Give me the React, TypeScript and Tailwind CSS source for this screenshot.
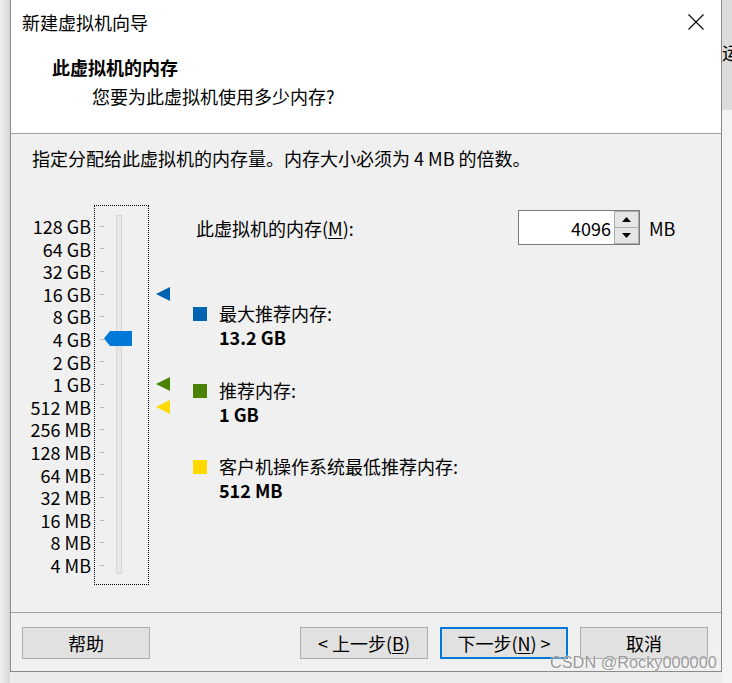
import React from "react";

const cjk = { fontFamily: '"Noto Sans CJK SC", "Noto Sans", sans-serif' };

const levels = [
  "128 GB",
  "64 GB",
  "32 GB",
  "16 GB",
  "8 GB",
  "4 GB",
  "2 GB",
  "1 GB",
  "512 MB",
  "256 MB",
  "128 MB",
  "64 MB",
  "32 MB",
  "16 MB",
  "8 MB",
  "4 MB",
];

// which slider row gets a coloured marker
const markers: Record<number, string> = {
  3: "#0063b1",
  7: "#498205",
  8: "#ffd800",
};

const legend = [
  { color: "bg-[#0063b1]", label: "最大推荐内存:", value: "13.2 GB", mt: "mt-[56px]" },
  { color: "bg-[#498205]", label: "推荐内存:", value: "1 GB", mt: "mt-[29px]" },
  { color: "bg-[#ffd800]", label: "客户机操作系统最低推荐内存:", value: "512 MB", mt: "mt-[28px]" },
];

function Triangle({ color }: { color: string }) {
  return (
    <svg width="14" height="14" viewBox="0 0 14 14">
      <polygon points="0,7 14,0 14,14" fill={color} />
    </svg>
  );
}

function Slider() {
  return (
    <div className="flex">
      <div className="flex w-[83px] flex-col items-end pt-[10px] pr-[3px]">
        {levels.map((l) => (
          <div key={l} className="h-[22.6px] text-[18px] leading-[22.6px]">
            {l}
          </div>
        ))}
      </div>
      <div className="flex h-[380px] w-[55px] border border-dotted border-black pt-[9px]">
        <div className="ml-[5px] flex w-[4px] flex-col">
          {levels.map((l) => (
            <div key={l} className="flex h-[22.6px] items-center">
              <div className="h-px w-[4px] bg-[#b8b8b8]" />
            </div>
          ))}
        </div>
        <div className="relative ml-[12px] h-[359px] w-[6px] border border-[#d6d6d6] bg-[#e7e7e7]">
          <svg
            className="absolute left-[-13px] top-[115px]"
            width="28"
            height="15"
            viewBox="0 0 28 15"
          >
            <polygon points="0,7.5 6,0 28,0 28,15 6,15" fill="#0078d7" />
          </svg>
        </div>
      </div>
      <div className="ml-[7px] flex w-[14px] flex-col pt-[10px]">
        {levels.map((l, i) => (
          <div key={l} className="flex h-[22.6px] items-center">
            {markers[i] && <Triangle color={markers[i]} />}
          </div>
        ))}
      </div>
    </div>
  );
}

function SpinInput() {
  return (
    <div className="flex h-[35px] w-[122px] border border-[#7a7a7a] bg-white">
      <div className="flex flex-1 items-center justify-end pr-[3px] text-[18px] leading-none">4096</div>
      <div className="flex w-[25px] flex-col">
        <div className="flex flex-1 items-center justify-center border border-[#adadad] bg-[#e5e5e5]">
          <svg width="9" height="5" viewBox="0 0 9 5">
            <polygon points="4.5,0 9,5 0,5" fill="#000" />
          </svg>
        </div>
        <div className="flex flex-1 items-center justify-center border border-t-0 border-[#adadad] bg-[#e5e5e5]">
          <svg width="9" height="5" viewBox="0 0 9 5">
            <polygon points="0,0 9,0 4.5,5" fill="#000" />
          </svg>
        </div>
      </div>
    </div>
  );
}

function Button({ children, primary }: { children: React.ReactNode; primary?: boolean }) {
  return (
    <button
      className={
        primary
          ? "flex h-[32px] w-[128px] items-center justify-center border-2 border-[#0078d7] bg-[#e1e1e1] text-[18px] leading-none"
          : "flex h-[32px] w-[128px] items-center justify-center border border-[#adadad] bg-[#e1e1e1] text-[18px] leading-none"
      }
    >
      {children}
    </button>
  );
}

export default function App() {
  return (
    <div className="relative flex h-[683px] w-[732px] overflow-hidden bg-[#ececec] text-black" style={cjk}>
      <div className="h-full w-[10px] bg-gradient-to-r from-[#efefef] to-[#d6d6d6]" />

      <div className="flex h-[672px] w-[712px] flex-col border-x border-b border-[#8a8a8a]">
        <div className="h-[134px] border-b border-[#a0a0a0] bg-white">
          <div className="flex h-[44px] items-center justify-between pl-[11px] pr-[17px]">
            <span className="text-[18px] leading-6">新建虚拟机向导</span>
            <svg width="16" height="16" viewBox="0 0 16 16">
              <path d="M0.5 0.5 L15.5 15.5 M15.5 0.5 L0.5 15.5" stroke="#000" strokeWidth="1.1" />
            </svg>
          </div>
          <div className="mt-[11px] pl-[41px] text-[18px] font-bold leading-6">此虚拟机的内存</div>
          <div className="mt-[5px] pl-[81px] text-[18px] leading-6">您要为此虚拟机使用多少内存?</div>
        </div>

        <div className="flex flex-1 flex-col bg-[#f0f0f0] pt-[12px]">
          <div className="pl-[21px] text-[18px] leading-6">
            指定分配给此虚拟机的内存量。内存大小必须为 4 MB 的倍数。
          </div>
          <div className="mt-[35px] flex">
            <Slider />
            <div className="ml-[23px] flex flex-col pt-[5px]">
              <div className="flex items-center">
                <div className="w-[325px] pl-[3px] text-[18px] leading-6">
                  此虚拟机的内存(<span className="underline underline-offset-2">M</span>):
                </div>
                <SpinInput />
                <span className="ml-[9px] text-[18px] leading-6">MB</span>
              </div>
              {legend.map((item) => (
                <div key={item.label} className={"flex " + item.mt}>
                  <div className={"mt-[6px] h-[14px] w-[14px] " + item.color} />
                  <div className="ml-[12px] flex flex-col">
                    <span className="text-[18px] leading-6">{item.label}</span>
                    <span className="text-[18px] font-bold leading-6">{item.value}</span>
                  </div>
                </div>
              ))}
            </div>
          </div>
        </div>

        <div className="flex h-[59px] items-start border-t border-[#a0a0a0] bg-[#f0f0f0] pl-[11px] pr-[13px] pt-[14px]">
          <Button>帮助</Button>
          <div className="ml-auto flex gap-[12px]">
            <Button>
              &lt; 上一步(<span className="underline underline-offset-2">B</span>)
            </Button>
            <Button primary>
              下一步(<span className="underline underline-offset-2">N</span>) &gt;
            </Button>
            <Button>取消</Button>
          </div>
        </div>
      </div>

      <div className="flex h-full w-[10px] flex-col">
        <div className="h-[110px] overflow-hidden bg-[#dcdcdc] pt-[40px] text-[18px] leading-6">运</div>
        <div className="flex-1 bg-[#f3f3f3]" />
      </div>

      <span
        className="absolute left-[550px] top-[654px] text-[16.3px] leading-4 text-[#9a9a9a] [text-shadow:0_0_2px_#fff]"
        style={{ fontFamily: '"Liberation Sans", Arial, sans-serif' }}
      >
        CSDN @Rocky000000
      </span>
    </div>
  );
}
